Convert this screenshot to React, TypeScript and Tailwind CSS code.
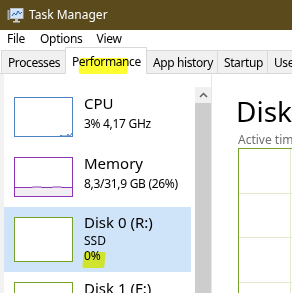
import React from 'react';

const tabs = [
  { label: 'Processes', active: false, w: 'w-[65px]' },
  { label: 'Performance', active: true, w: 'w-[82px]' },
  { label: 'App history', active: false, w: 'w-[72px]' },
  { label: 'Startup', active: false, w: 'w-[51px]' },
  { label: 'Users', active: false, w: 'w-[50px]' },
];

function AppIcon() {
  return (
    <svg width="17" height="17" viewBox="0 0 17 17">
      <rect x="0.5" y="3" width="2" height="10" fill="#a7adb5" />
      <rect x="3.5" y="1.5" width="12.5" height="10" fill="#e8eef5" stroke="#b6bcc4" />
      <rect x="4.5" y="2.5" width="10.5" height="8" fill="#cde2f6" />
      <polyline points="5,9 7,6 9,8 11,4 13,7 15,5" fill="none" stroke="#2463ad" strokeWidth="1" />
      <rect x="8" y="12" width="3" height="2" fill="#b6bcc4" />
      <rect x="6" y="14" width="7" height="1.5" fill="#c9ced4" />
    </svg>
  );
}

function CpuGraph() {
  return (
    <svg width="59" height="40" className="block shrink-0">
      <rect x="0.5" y="0.5" width="58" height="39" fill="#fff" stroke="#4f83c4" />
      <polyline points="46,39 47,38 48,39 53,39 54,37 55,39 57,38 58,36" fill="none" stroke="#4f83c4" strokeWidth="1" />
    </svg>
  );
}

function MemoryGraph() {
  return (
    <svg width="59" height="40" className="block shrink-0">
      <rect x="0.5" y="0.5" width="58" height="39" fill="#fff" stroke="#8c34b4" />
      <rect x="1" y="30.5" width="57" height="8.5" fill="#f1eef4" />
      <polyline points="1,30.5 18,30.5 19,30 27,30 28,30.5 38,30.5 39,30 47,30 48,30.5 58,30.5" fill="none" stroke="#8c34b4" strokeWidth="1" />
    </svg>
  );
}

function DiskGraph({ h }: { h: number }) {
  return <div className="w-[59px] shrink-0 border border-[#76a22a] bg-white" style={{ height: h }} />;
}

export default function App() {
  return (
    <div className="w-[292px] h-[293px] overflow-hidden bg-white font-['Noto_Sans',sans-serif] text-black flex flex-col">
      {/* title bar */}
      <div className="h-[30px] shrink-0 bg-[#5a4a1c] flex items-center pl-[7px] gap-[5px]">
        <AppIcon />
        <span className="text-white text-[12px] leading-none">Task Manager</span>
      </div>

      {/* menu */}
      <div className="h-[17px] shrink-0 flex items-center text-[12px] leading-none tracking-[-0.3px]">
        <span className="ml-[7px]">File</span>
        <span className="ml-[15px]">Options</span>
        <span className="ml-[14px]">View</span>
      </div>

      {/* tabs */}
      <div className="h-[27px] shrink-0 flex items-end border-b border-[#d9d9d9] pl-[1px]">
        {tabs.map((t) => (
          <div
            key={t.label}
            className={
              t.active
                ? `relative z-10 -mb-px -ml-px ${t.w} shrink-0 h-[27px] pl-[6px] flex items-center pt-[2px] bg-white border border-b-0 border-[#d9d9d9] text-[12px] tracking-[-0.4px] whitespace-nowrap`
                : `relative -ml-px first:ml-0 ${t.w} shrink-0 h-[23px] pl-[6px] flex items-center pt-[1px] bg-[#f0f0f0] border border-b-0 border-[#d9d9d9] text-[12px] tracking-[-0.4px] whitespace-nowrap overflow-hidden`
            }
          >
            {t.label}
            {t.active && (
              <span className="absolute left-[13px] top-[10px] w-[49px] h-[16px] bg-[#ffff30] mix-blend-multiply rounded-[2px] -skew-x-3" />
            )}
          </div>
        ))}
      </div>

      {/* body */}
      <div className="flex-1 flex min-h-0">
        <div className="w-[4px] shrink-0 bg-[#f2f2f2]" />

        {/* sidebar */}
        <div className="w-[187px] shrink-0 pt-[13px] flex flex-col">
          <div className="h-[60px] shrink-0 pt-[10px] pl-[10px] flex">
            <CpuGraph />
            <div className="ml-[11px] -mt-[4px]">
              <div className="text-[15px] leading-[20px]">CPU</div>
              <div className="text-[12px] leading-[15px] mt-[3px] whitespace-nowrap tracking-[-0.3px]">3% 4,17 GHz</div>
            </div>
          </div>
          <div className="h-[60px] shrink-0 pt-[10px] pl-[10px] flex">
            <MemoryGraph />
            <div className="ml-[11px] -mt-[4px]">
              <div className="text-[15px] leading-[20px]">Memory</div>
              <div className="text-[12px] leading-[15px] mt-[3px] whitespace-nowrap tracking-[-0.3px]">8,3/31,9 GB (26%)</div>
            </div>
          </div>
          <div className="relative h-[65px] shrink-0 pt-[10px] pl-[10px] flex bg-[#cfe4f8]">
            <DiskGraph h={45} />
            <div className="ml-[11px] -mt-[5px]">
              <div className="text-[15px] leading-[20px] whitespace-nowrap">Disk 0 (R:)</div>
              <div className="text-[12px] leading-[15px] mt-[1px]">SSD</div>
              <div className="text-[12px] leading-[15px]">0%</div>
            </div>
            <span className="absolute left-[79px] top-[45px] w-[22px] h-[16px] bg-[#ffff30] mix-blend-multiply rounded-[2px] -skew-x-6" />
          </div>
          <div className="h-[60px] shrink-0 pt-[10px] pl-[10px] flex">
            <DiskGraph h={45} />
            <div className="ml-[11px] -mt-[4px]">
              <div className="text-[15px] leading-[20px] whitespace-nowrap">Disk 1 (F:)</div>
            </div>
          </div>
        </div>

        {/* scrollbar */}
        <div className="w-[4px] shrink-0" />
        <div className="w-[16px] shrink-0 mt-[13px] flex flex-col">
          <div className="h-[16px] bg-[#f0f0f0] flex items-center justify-center">
            <svg width="9" height="6" viewBox="0 0 9 6">
              <polyline points="1,5 4.5,1.5 8,5" fill="none" stroke="#606060" strokeWidth="1.5" />
            </svg>
          </div>
          <div className="flex-1 bg-[#cdcdcd]" />
        </div>
        <div className="w-px shrink-0 bg-[#e6e6e6]" />

        {/* detail panel */}
        <div className="flex-1 pl-[26px] pt-[20px] flex flex-col min-w-0">
          <div className="text-[28px] leading-[34px] -ml-[2px]">Disk</div>
          <div className="text-[12px] leading-[16px] mt-[4px] text-[#707070] whitespace-nowrap">Active time</div>
          <div className="flex-1 border-l border-t border-[#76a22a] w-[80px] relative">
            <svg width="80" height="200" className="absolute left-0 top-0">
              <line x1="0" y1="44.5" x2="80" y2="44.5" stroke="#e0ebc9" />
              <line x1="0" y1="88.5" x2="80" y2="88.5" stroke="#e0ebc9" />
              <line x1="0" y1="133.5" x2="80" y2="133.5" stroke="#e0ebc9" />
              <line x1="51.5" y1="0" x2="51.5" y2="200" stroke="#e0ebc9" />
            </svg>
          </div>
        </div>
      </div>
    </div>
  );
}
